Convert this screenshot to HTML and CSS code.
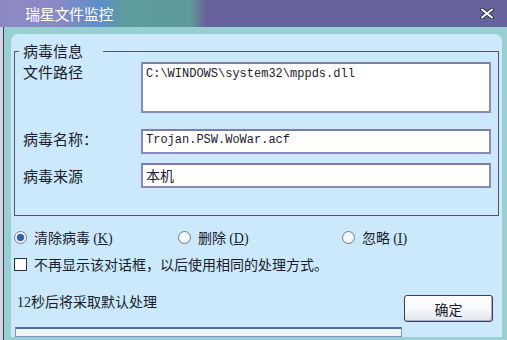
FILE: index.html
```html
<!DOCTYPE html>
<html lang="zh-CN">
<head>
  <meta charset="UTF-8" />
  <title>瑞星文件监控</title>
  <meta name="viewport" content="width=device-width, initial-scale=1.0">
  <link rel="stylesheet" href="styles.css">
</head>
<body>
  <div class="window">
    <div class="titlebar">
      <span class="title">瑞星文件监控</span>
      <svg class="close" width="14" height="11" viewBox="0 0 14 11">
        <path d="M2 1.5 L12 9.5 M12 1.5 L2 9.5" stroke="#2c3448" stroke-width="4" stroke-linecap="round" />
        <path d="M2 1.5 L12 9.5 M12 1.5 L2 9.5" stroke="#ffffff" stroke-width="2" stroke-linecap="round" />
      </svg>
    </div>

    <div class="frame">
      <div class="client">
        <!-- Virus info -->
        <fieldset class="group">
          <legend>病毒信息</legend>
          <div class="info">
            <span class="label">文件路径</span>
            <div class="field field-tall">C:\WINDOWS\system32\mppds.dll</div>
            <span class="label">病毒名称：</span>
            <div class="field">Trojan.PSW.WoWar.acf</div>
            <span class="label label-low">病毒来源</span>
            <div class="field field-cjk">本机</div>
          </div>
        </fieldset>

        <!-- Actions -->
        <div class="actions">
          <span class="option"><span class="radio checked"></span><span>清除病毒 <span class="key">(<u>K</u>)</span></span></span>
          <span class="option"><span class="radio"></span><span>删除 <span class="key">(<u>D</u>)</span></span></span>
          <span class="option"><span class="radio"></span><span>忽略 <span class="key">(<u>I</u>)</span></span></span>
        </div>

        <div class="option remember">
          <span class="checkbox"></span><span>不再显示该对话框，以后使用相同的处理方式。</span>
        </div>

        <!-- Countdown -->
        <div class="footer">
          <div class="countdown">
            <div class="status"><span class="num">12</span>秒后将采取默认处理</div>
            <div class="progress"></div>
          </div>
          <button class="ok">确定</button>
        </div>
      </div>
    </div>
  </div>
</body>
</html>
```

FILE: styles.css
```css
body {
  margin: 0;
  background: #98cfd0;
  font-family: "Noto Sans CJK SC", "DejaVu Sans", sans-serif;
  color: #1c1c2c;
}
.window {
  width: 507px;
  height: 340px;
  display: flex;
  flex-direction: column;
  overflow: hidden;
}
.titlebar {
  height: 27px;
  flex: none;
  display: flex;
  align-items: center;
  justify-content: space-between;
  padding: 0 13px 0 25px;
  background: linear-gradient(90deg, #8c88c2 0, #8a89c6 55px, #5c8fcc 100px, #5e9b9b 125px, #5f9a98 190px, #67629b 206px, #67629b 100%);
}
.title {
  color: #ffffff;
  font-size: 15px;
  line-height: 27px;
  letter-spacing: -0.3px;
}
.close {
  display: block;
  margin-top: -1px;
}
.frame {
  flex: 1;
  display: flex;
  padding: 7px 5px 3px 11px;
  background: linear-gradient(90deg, #d2d6e4 0 3px, #3c3c50 3px 4px, #98cfd0 4px);
}
.client {
  flex: 1;
  background: #cbe9fa;
  border-radius: 7px 7px 0 0;
  display: flex;
  flex-direction: column;
}
.group {
  margin: 8px 3px 0 3px;
  padding: 2px 7px 27px 8px;
  border: 1px solid #55556a;
  min-width: 0;
}
.group legend {
  font-size: 15px;
  line-height: 18px;
  padding: 0 20px 0 4px;
  margin-left: -4px;
}
.info {
  display: grid;
  grid-template-columns: 118px 1fr;
  row-gap: 16px;
  align-items: start;
}
.info .field:last-child {
  margin-top: -7px;
}
.info .label-low {
  margin-top: -4px;
}
.label {
  font-size: 15px;
  line-height: 18px;
  padding-top: 1px;
}
.field {
  height: 25px;
  box-sizing: border-box;
  border: 2px solid #8a8abc;
  border-top-color: #7c7cae;
  background: #ffffff;
  padding: 1px 3px;
  font-family: "Liberation Mono", monospace;
  font-size: 12px;
  line-height: 17px;
}
.field-tall {
  height: 51px;
  padding-top: 2px;
}
.field-cjk {
  font-family: "Noto Sans CJK SC", sans-serif;
  font-size: 14px;
  line-height: 18px;
}
.actions {
  display: grid;
  grid-template-columns: 164px 164px 1fr;
  margin: 11px 0 0 3px;
}
.option {
  display: flex;
  align-items: center;
  gap: 7px;
  height: 20px;
  font-size: 14px;
}
.key {
  font-family: "Liberation Serif", serif;
  font-size: 14px;
}
.key u {
  text-underline-offset: 1px;
}
.num {
  font-family: "Liberation Serif", serif;
}
.radio {
  width: 11px;
  height: 11px;
  border-radius: 50%;
  border: 1px solid #6d7d9e;
  background: radial-gradient(circle at 40% 35%, #ffffff 0, #f2f4f8 55%, #d8dde8 100%);
  flex: none;
}
.radio.checked {
  background: radial-gradient(circle, #2d62b4 0 3px, #6e95cf 3.6px, #ffffff 4.2px, #eef1f6 100%);
}
.remember {
  margin: 7px 0 0 3px;
}
.checkbox {
  width: 11px;
  height: 11px;
  border: 1px solid #2e2e3e;
  background: #ffffff;
  flex: none;
}
.footer {
  display: flex;
  gap: 2px;
  margin-top: 17px;
  padding: 0 9px 0 4px;
}
.countdown {
  flex: 1;
}
.status {
  font-size: 14px;
  line-height: 20px;
  padding-left: 2px;
}
.progress {
  margin-top: 14px;
  height: 7px;
  border: 1px solid #7a98c8;
  border-top: 2px solid #4a6fae;
  background: #f1f5fb;
}
.ok {
  width: 89px;
  height: 27px;
  margin-top: 4px;
  border: 1px solid #3c3c58;
  border-radius: 3px;
  background: linear-gradient(#ffffff, #f6f8fb 55%, #dfe5ef);
  box-shadow: inset -1px -1px #a4aec6;
  font-family: "Noto Sans CJK SC", sans-serif;
  font-size: 14px;
  color: #1c1c2c;
  padding: 0;
}
```
